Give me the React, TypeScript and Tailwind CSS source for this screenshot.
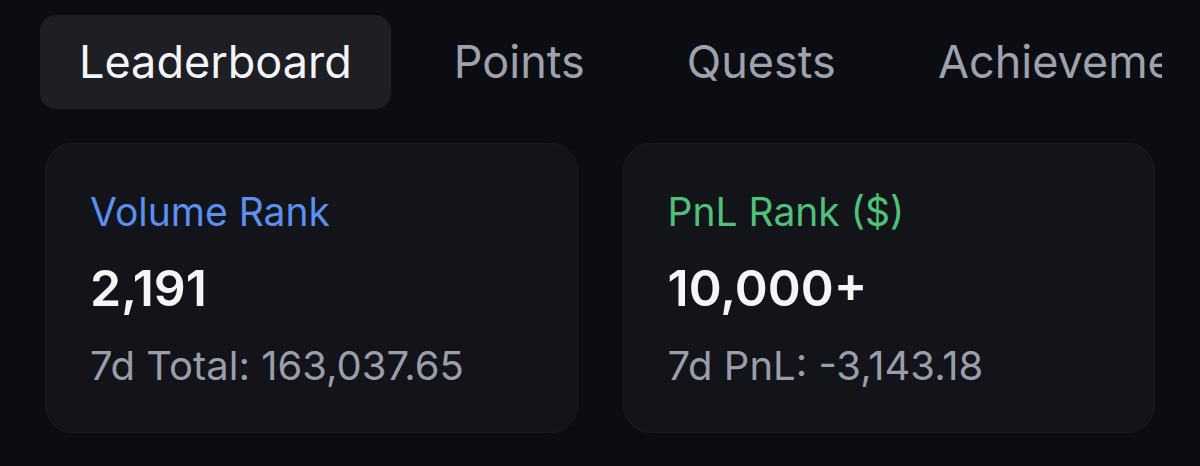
const tabs = ['Leaderboard', 'Points', 'Quests', 'Achievements']

function StatCard({
  label,
  labelClass,
  value,
  sub,
}: {
  label: string
  labelClass: string
  value: string
  sub: string
}) {
  return (
    <div className="flex-1 rounded-[28px] border border-[#1a1c22] bg-[#121419] px-[44px] pt-[44px] pb-[42px]">
      <p className={`text-[39px] leading-[48px] ${labelClass}`}>{label}</p>
      <p className="mt-[22px] text-[50px] font-semibold leading-[60px] text-[#f4f5f7]">{value}</p>
      <p className="mt-[24px] text-[40px] leading-[48px] text-[#9a9eaa]">{sub}</p>
    </div>
  )
}

export default function App() {
  return (
    <div
      className="h-[466px] w-[1200px] overflow-hidden bg-[#0c0d12]"
      style={{ fontFamily: 'Inter, "Noto Sans", sans-serif' }}
    >
      {/* tab strip, scrolls off the right edge */}
      <div className="ml-[40px] mt-[15px] flex w-[1122px] gap-[24px] overflow-hidden whitespace-nowrap">
        {tabs.map((t, i) => (
          <div
            key={t}
            className={`flex h-[94px] shrink-0 items-center rounded-[16px] px-[39px] text-[45px] ${
              i === 0 ? 'bg-[#1e1f24] text-[#f4f5f7]' : 'text-[#9ea2ae]'
            }`}
          >
            {t}
          </div>
        ))}
      </div>

      <div className="mx-[45px] mt-[34px] flex gap-[45px]">
        <StatCard
          label="Volume Rank"
          labelClass="text-[#5b8ff0]"
          value="2,191"
          sub="7d Total: 163,037.65"
        />
        <StatCard
          label="PnL Rank ($)"
          labelClass="text-[#4fc27a]"
          value="10,000+"
          sub="7d PnL: -3,143.18"
        />
      </div>
    </div>
  )
}
